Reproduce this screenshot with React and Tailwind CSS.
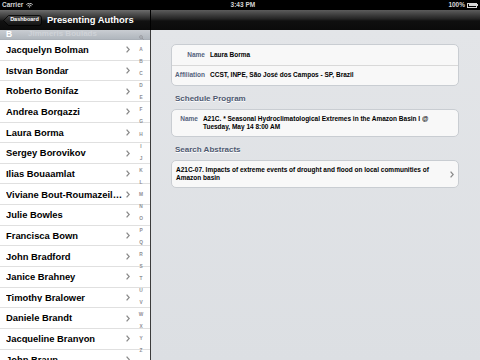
import React from "react";

const authors = [
  "Jacquelyn Bolman",
  "Istvan Bondar",
  "Roberto Bonifaz",
  "Andrea Borgazzi",
  "Laura Borma",
  "Sergey Borovikov",
  "Ilias Bouaamlat",
  "Viviane Bout-Roumazeilles",
  "Julie Bowles",
  "Francisca Bown",
  "John Bradford",
  "Janice Brahney",
  "Timothy Bralower",
  "Daniele Brandt",
  "Jacqueline Branyon",
  "John Braun",
];

const letters = "ABCDEFGHIJKLMNOPQRSTUVWXYZ".split("");

function Chevron({ className = "" }) {
  return (
    <svg width="4" height="7" viewBox="0 0 4 7" className={className}>
      <polyline points="0.6,0.6 3.2,3.5 0.6,6.4" fill="none" stroke="#8a8a8a" strokeWidth="1.3" />
    </svg>
  );
}

function StatusBar() {
  return (
    <div className="h-[10px] bg-black flex items-center px-[2px] text-[#d6d6d6] text-[6.5px] font-bold leading-none relative">
      <div className="flex items-center gap-[3px]">
        <span>Carrier</span>
        <svg width="7" height="5" viewBox="0 0 7 5">
          <path d="M0.3 1.6 A4.6 4.6 0 0 1 6.7 1.6" fill="none" stroke="#d6d6d6" strokeWidth="0.9" />
          <path d="M1.5 2.8 A3 3 0 0 1 5.5 2.8" fill="none" stroke="#d6d6d6" strokeWidth="0.9" />
          <path d="M3.5 4.8 L2.5 3.8 A1.4 1.4 0 0 1 4.5 3.8 Z" fill="#d6d6d6" />
        </svg>
      </div>
      <div className="flex-1 text-center pl-[4px]">3:43 PM</div>
      <div className="flex items-center gap-[2px]">
        <span>100%</span>
        <div className="flex items-center">
          <div className="w-[10px] h-[5px] border border-[#d6d6d6] p-[0.5px]">
            <div className="w-full h-full bg-[#d6d6d6]" />
          </div>
          <div className="w-[1px] h-[2px] bg-[#d6d6d6]" />
        </div>
      </div>
    </div>
  );
}

function BackButton() {
  return (
    <div className="relative w-[39px] h-[11px] flex items-center justify-center pl-[4px]">
      <svg width="39" height="11" viewBox="0 0 39 11" className="absolute inset-0">
        <defs>
          <linearGradient id="bb" x1="0" y1="0" x2="0" y2="1">
            <stop offset="0" stopColor="#4a4a4a" />
            <stop offset="0.5" stopColor="#262626" />
            <stop offset="1" stopColor="#121212" />
          </linearGradient>
        </defs>
        <path
          d="M5.5 0.5 H36 A2.5 2.5 0 0 1 38.5 3 V8 A2.5 2.5 0 0 1 36 10.5 H5.5 L0.6 5.5 Z"
          fill="url(#bb)"
          stroke="#000"
          strokeWidth="0.8"
        />
      </svg>
      <span className="relative text-white text-[5.5px] font-bold leading-none">Dashboard</span>
    </div>
  );
}

export default function App() {
  return (
    <div
      className="w-[480px] h-[360px] overflow-hidden flex flex-col bg-black"
      style={{ fontFamily: '"Liberation Sans", Arial, sans-serif' }}
    >
      <StatusBar />

      {/* Nav bars */}
      <div className="h-[20px] flex">
        <div className="w-[150px] flex items-center gap-[5px] pl-[3px] bg-[linear-gradient(to_bottom,#6c6c6c,#2a2a2a_45%,#111_55%,#0b0b0b)]">
          <BackButton />
          <span className="text-white text-[9.4px] font-bold leading-none">Presenting Authors</span>
        </div>
        <div className="w-[1px] bg-black" />
        <div className="flex-1 bg-[linear-gradient(to_bottom,#5c5c5c,#232323_45%,#0f0f0f_55%,#0b0b0b)]" />
      </div>

      <div className="flex-1 flex min-h-0">
        {/* Author list */}
        <div className="w-[150px] bg-white relative overflow-hidden">
          <div className="h-[10px] bg-[linear-gradient(to_bottom,#c9cdd2,#b0b6bd)] flex items-center px-[6px] relative border-b border-[#a9afb6]">
            <span className="text-white text-[8.5px] font-bold leading-none">B</span>
            <span className="absolute left-[28px] top-[0px] text-[#d9dce0] text-[8px] font-bold opacity-60 leading-none">
              Jimmeris Boulads
            </span>
          </div>
          {authors.map((name) => (
            <div
              key={name}
              className="h-[20.65px] flex items-center pl-[6px] pr-[20px] border-b border-[#e0e0e0] shrink-0"
            >
              <span className="text-black text-[9.4px] font-bold leading-none truncate flex-1">
                {name}
              </span>
              <Chevron className="ml-[4px] shrink-0" />
            </div>
          ))}

          {/* Section index */}
          <div className="absolute top-[1px] right-[5px] w-[8px] flex flex-col items-center text-[#8e8e93] text-[4.8px] font-bold leading-none">
            <div className="h-[13.7px] flex items-center">
              <svg width="5" height="5" viewBox="0 0 5 5">
                <circle cx="2" cy="2" r="1.4" fill="none" stroke="#8e8e93" strokeWidth="0.7" />
                <line x1="3" y1="3" x2="4.6" y2="4.6" stroke="#8e8e93" strokeWidth="0.8" />
              </svg>
            </div>
            {letters.map((l) => (
              <div key={l} className="h-[12.04px] flex items-center">
                {l}
              </div>
            ))}
          </div>
        </div>

        <div className="w-[1px] bg-[#3c3c3c]" />

        {/* Detail */}
        <div className="flex-1 bg-[linear-gradient(to_bottom,#e3e5e8,#dcdfe3)] pl-[20px] pr-[21px] pt-[14px]">
          <div className="bg-[#f8f8f8] border border-[#c9cdd2] rounded-[5px]">
            <div className="h-[20.5px] flex items-center border-b border-[#d9d9d9]">
              <span className="w-[33px] text-right text-[#55637d] text-[6.5px] font-bold leading-none">Name</span>
              <span className="ml-[5px] text-black text-[6.5px] font-bold leading-none">Laura Borma</span>
            </div>
            <div className="h-[19.5px] flex items-center">
              <span className="w-[33px] text-right text-[#55637d] text-[6.5px] font-bold leading-none">Affiliation</span>
              <span className="ml-[5px] text-black text-[6.5px] font-bold leading-none">
                CCST, INPE, São José dos Campos - SP, Brazil
              </span>
            </div>
          </div>

          <div className="mt-[8px] mb-[5px] h-[10px] flex items-center pl-[4px] text-[#4d5870] text-[8px] font-bold leading-none [text-shadow:0_1px_0_#fff]">
            Schedule Program
          </div>

          <div className="bg-[#f8f8f8] border border-[#c9cdd2] rounded-[5px] h-[28px] flex items-start pt-[5px]">
            <span className="w-[33px] text-right text-[#55637d] text-[6.5px] font-bold leading-[7.5px]">
              Name
            </span>
            <span className="ml-[5px] pr-[16px] text-black text-[6.5px] font-bold leading-[7.5px]">
              A21C. * Seasonal Hydroclimatological Extremes in the Amazon Basin I @ Tuesday, May 14 8:00 AM
            </span>
          </div>

          <div className="mt-[8px] mb-[5px] h-[10px] flex items-center pl-[4px] text-[#4d5870] text-[8px] font-bold leading-none [text-shadow:0_1px_0_#fff]">
            Search Abstracts
          </div>

          <div className="bg-[#f8f8f8] border border-[#c9cdd2] rounded-[5px] h-[28px] flex items-center pl-[4px] pr-[4px]">
            <span className="flex-1 pr-[10px] text-black text-[6.5px] font-bold leading-[8px]">
              A21C-07. Impacts of extreme events of drought and flood on local communities of Amazon basin
            </span>
            <Chevron />
          </div>
        </div>
      </div>
    </div>
  );
}
